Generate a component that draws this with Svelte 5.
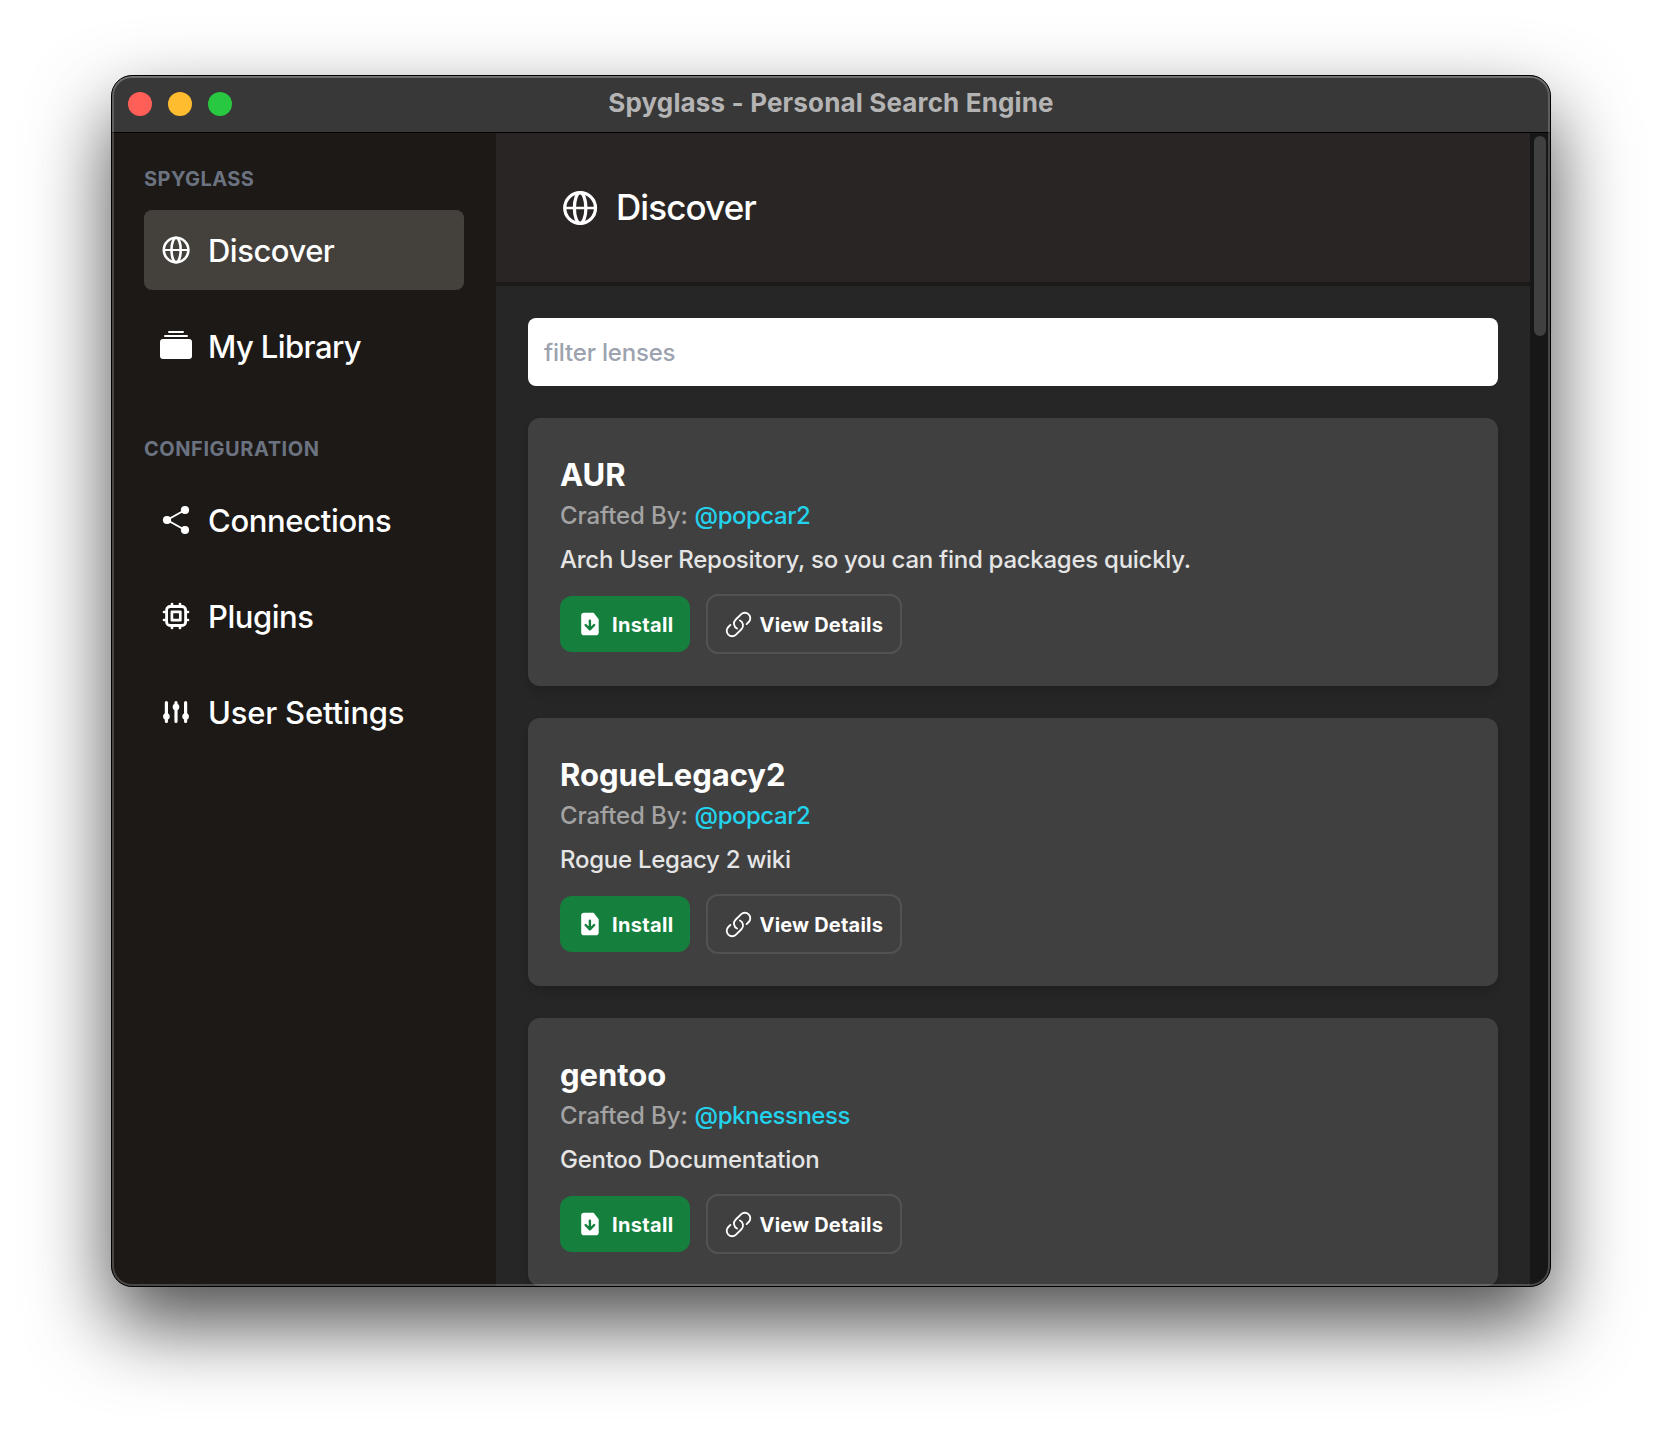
<script>
  const groups = [
    {
      title: 'Spyglass',
      tracking: 0.42,
      items: [
        { label: 'Discover', icon: 'globe', active: true, tracking: -0.5 },
        { label: 'My Library', icon: 'library', tracking: -0.58 }
      ]
    },
    {
      title: 'Configuration',
      tracking: 0.55,
      items: [
        { label: 'Connections', icon: 'share', tracking: -0.35 },
        { label: 'Plugins', icon: 'chip', tracking: -0.48 },
        { label: 'User Settings', icon: 'sliders', tracking: -0.2 }
      ]
    }
  ];

  const lenses = [
    { name: 'AUR', author: '@popcar2', description: 'Arch User Repository, so you can find packages quickly.' },
    { name: 'RogueLegacy2', author: '@popcar2', description: 'Rogue Legacy 2 wiki' },
    { name: 'gentoo', author: '@pknessness', description: 'Gentoo Documentation' }
  ];

  let filter = $state('');
</script>

{#snippet icon(name)}
  <svg class="icon" viewBox="0 0 32 32" fill="none" stroke="currentColor" stroke-linecap="round" stroke-linejoin="round" aria-hidden="true">
    {#if name === 'globe'}
      <circle cx="16.1" cy="16" r="12.3" stroke-width="2.6" />
      <ellipse cx="16.1" cy="16" rx="4.6" ry="12.3" stroke-width="2.6" />
      <path d="M4 16h24.2" stroke-width="2" />
    {:else if name === 'library'}
      <g transform="scale(2)" fill="currentColor" stroke="none">
        <path d="M0 13a1.5 1.5 0 0 0 1.5 1.5h13A1.5 1.5 0 0 0 16 13V6a1.5 1.5 0 0 0-1.5-1.5h-13A1.5 1.5 0 0 0 0 6v7zM2 3a.5.5 0 0 0 .5.5h11a.5.5 0 0 0 0-1h-11A.5.5 0 0 0 2 3zm2-2a.5.5 0 0 0 .5.5h7a.5.5 0 0 0 0-1h-7A.5.5 0 0 0 4 1z" />
      </g>
    {:else if name === 'share'}
      <path d="M25 6 7 16l18 10" stroke-width="2" />
      <g fill="currentColor" stroke="none">
        <circle cx="25" cy="6" r="4.1" />
        <circle cx="7" cy="16" r="4.1" />
        <circle cx="25" cy="26" r="4.1" />
      </g>
    {:else if name === 'chip'}
      <rect x="6.6" y="6.5" width="19" height="19" rx="3.6" stroke-width="2.8" />
      <rect x="11.9" y="11.8" width="8.4" height="8.4" stroke-width="2.7" />
      <path d="M12 6V4M20 6V4M12 28v-2M20 28v-2M6 12H4M6 20H4M28 12h-2M28 20h-2" stroke-width="2.7" />
    {:else if name === 'sliders'}
      <path d="M6.4 6.5v19M16 6.5v19M25.6 6.5v19" stroke-width="3.2" />
      <g fill="currentColor" stroke="none">
        <circle cx="6.4" cy="20.6" r="3.3" />
        <circle cx="16" cy="11" r="3.3" />
        <circle cx="25.6" cy="20.6" r="3.3" />
      </g>
    {/if}
  </svg>
{/snippet}

<div class="desktop">
  <div class="window">
    <header class="titlebar">
      <div class="lights">
        <span class="light close"></span>
        <span class="light minimize"></span>
        <span class="light zoom"></span>
      </div>
      <div class="title">Spyglass - Personal Search Engine</div>
    </header>

    <div class="body">
      <nav class="sidebar">
        {#each groups as group}
          <section class="group">
            <h2 style:letter-spacing="{group.tracking}px">{group.title}</h2>
            <ul>
              {#each group.items as item}
                <li class="item" class:active={item.active}>
                  {@render icon(item.icon)}
                  <span style:letter-spacing="{item.tracking}px">{item.label}</span>
                </li>
              {/each}
            </ul>
          </section>
        {/each}
      </nav>

      <main class="content">
        <div class="heading">
          {@render icon('globe')}
          <h1>Discover</h1>
        </div>
        <div class="lenses">
          <input class="filter" type="text" placeholder="filter lenses" bind:value={filter} />
          {#each lenses as lens}
            <article class="card">
              <h3>{lens.name}</h3>
              <p class="author">Crafted By: <a href="#author">{lens.author}</a></p>
              <p class="description">{lens.description}</p>
              <div class="actions">
                <button class="btn install">
                  <svg viewBox="0 0 24 24" aria-hidden="true">
                    <path fill="#fff" d="M6 .8h9.6l5.1 6.4v13.2a2.8 2.8 0 0 1-2.8 2.8H6a2.8 2.8 0 0 1-2.8-2.8V3.6A2.8 2.8 0 0 1 6 .8z" />
                    <path fill="none" stroke="#15803d" stroke-width="2.4" stroke-linecap="round" stroke-linejoin="round" d="M11.9 8.6v8.6m-4.3-4.2 4.3 4.4 4.3-4.4" />
                  </svg>
                  <span>Install</span>
                </button>
                <button class="btn details">
                  <svg viewBox="0 0 24 24" fill="none" stroke="currentColor" stroke-width="1.5" stroke-linecap="round" stroke-linejoin="round" aria-hidden="true">
                    <path d="M13.19 8.688a4.5 4.5 0 0 1 1.242 7.244l-4.5 4.5a4.5 4.5 0 0 1-6.364-6.364l1.757-1.757m13.35-.622 1.757-1.757a4.5 4.5 0 0 0-6.364-6.364l-4.5 4.5a4.5 4.5 0 0 0 1.242 7.244" />
                  </svg>
                  <span>View Details</span>
                </button>
              </div>
            </article>
          {/each}
        </div>
      </main>

      <div class="track"><div class="thumb"></div></div>
    </div>
  </div>
</div>

<style>
  :global(body) {
    margin: 0;
    background: #fff;
    overflow: hidden;
  }
  .desktop {
    box-sizing: border-box;
    height: 1434px;
    padding: 75px 111px 147px;
    font-family: Inter, 'Liberation Sans', sans-serif;
    font-weight: 450;
    color: #fff;
    overflow: hidden;
  }
  .window {
    position: relative;
    box-sizing: border-box;
    height: 1212px;
    display: flex;
    flex-direction: column;
    border: 1px solid #000;
    border-radius: 21px;
    background: #1c1917;
    overflow: hidden;
    box-shadow: 0 37px 80px rgba(0, 0, 0, 0.7);
  }
  /* light rim drawn over the whole window edge */
  .window::after {
    content: '';
    position: absolute;
    inset: 0;
    border-radius: 20px;
    box-shadow: inset 0 0 0 2px rgba(255, 255, 255, 0.2), inset 0 1.5px 0 rgba(255, 255, 255, 0.15);
    pointer-events: none;
  }
  h1, h2, h3, p, ul {
    margin: 0;
    padding: 0;
  }
  .titlebar {
    flex: none;
    display: grid;
    grid-template-columns: 1fr auto 1fr;
    align-items: center;
    height: 56px;
    padding: 0 16px;
    background: #383838;
    border-bottom: 1px solid #000;
  }
  .lights {
    display: flex;
    gap: 16px;
  }
  .light {
    width: 24px;
    height: 24px;
    border-radius: 50%;
  }
  .close { background: #ff5f57; }
  .minimize { background: #febc2e; }
  .zoom { background: #28c840; }
  .title {
    padding-bottom: 2px;
    font-size: 26px;
    font-weight: 700;
    line-height: 32px;
    letter-spacing: 0.15px;
    color: #b4b4b4;
  }
  .body {
    flex: 1;
    min-height: 0;
    display: flex;
  }
  .sidebar {
    flex: none;
    box-sizing: border-box;
    width: 384px;
    padding: 30px 32px 0;
    background: #1c1917;
  }
  .group + .group {
    margin-top: 47px;
  }
  .sidebar h2 {
    height: 47px;
    font-size: 20px;
    font-weight: 700;
    line-height: 32px;
    text-transform: uppercase;
    color: #6b7280;
  }
  ul {
    display: flex;
    flex-direction: column;
    gap: 16px;
    list-style: none;
  }
  .item {
    display: flex;
    align-items: center;
    gap: 16px;
    height: 80px;
    box-sizing: border-box;
    padding: 0 16px;
    border-radius: 8px;
    font-size: 31px;
    line-height: 48px;
    white-space: nowrap;
  }
  .item span {
    padding-top: 2px;
  }
  .active {
    background: #44403c;
  }
  .icon {
    flex: none;
    width: 32px;
    height: 32px;
  }
  .content {
    flex: 1;
    min-width: 0;
    display: flex;
    flex-direction: column;
    background: #262626;
    overflow: hidden;
  }
  .heading {
    flex: none;
    display: flex;
    align-items: center;
    gap: 16px;
    height: 149px;
    padding: 0 64px;
    background: #292524;
    border-bottom: 4px solid #1c1917;
  }
  .heading .icon {
    width: 40px;
    height: 40px;
  }
  .heading h1 {
    padding-bottom: 2px;
    font-size: 35px;
    font-weight: 450;
    line-height: 48px;
    letter-spacing: -0.9px;
  }
  .lenses {
    display: flex;
    flex-direction: column;
    gap: 32px;
    padding: 32px;
  }
  .filter {
    box-sizing: border-box;
    width: 100%;
    height: 68px;
    padding: 0 16px;
    border: 0;
    border-radius: 8px;
    background: #fff;
    color: #262626;
    font: 450 24px / 32px Inter, 'Liberation Sans', sans-serif;
    letter-spacing: -0.2px;
    outline: none;
  }
  .filter::placeholder {
    color: #9ca3af;
    opacity: 1;
  }
  .card {
    flex: none;
    box-sizing: border-box;
    height: 268px;
    padding: 32px;
    border-radius: 12px;
    background: #404040;
    box-shadow: 0 8px 12px -2px rgba(0, 0, 0, 0.1), 0 4px 8px -4px rgba(0, 0, 0, 0.1);
  }
  .card h3 {
    height: 50px;
    font-size: 31px;
    font-weight: 700;
    line-height: 49px;
    letter-spacing: -0.03px;
  }
  .author,
  .description {
    font-size: 24px;
    line-height: 32px;
  }
  .author {
    color: #a3a3a3;
    letter-spacing: -0.1px;
  }
  .author a {
    margin-left: 0.6px;
    color: #22d3ee;
    text-decoration: none;
    letter-spacing: -0.48px;
  }
  .description {
    margin-top: 12px;
    color: #e5e5e5;
    letter-spacing: -0.27px;
  }
  .actions {
    display: flex;
    align-items: center;
    gap: 16px;
    margin-top: 18px;
  }
  .btn {
    box-sizing: border-box;
    display: flex;
    align-items: center;
    margin: 0;
    border: 0;
    border-radius: 12px;
    background: transparent;
    color: #fff;
    font: 700 20px / 32px Inter, 'Liberation Sans', sans-serif;
    white-space: nowrap;
  }
  .btn span {
    padding-top: 1.5px;
  }
  .install {
    gap: 10px;
    width: 130px;
    height: 56px;
    padding: 0 0 0 18px;
    background: #15803d;
    letter-spacing: 0.35px;
  }
  .install svg {
    flex: none;
    width: 24px;
    height: 24px;
  }
  .details {
    gap: 7px;
    width: 196px;
    height: 60px;
    padding: 0 0 0 15.5px;
    border: 2px solid #525252;
    letter-spacing: 0.2px;
  }
  .details svg {
    flex: none;
    width: 29px;
    height: 29px;
  }
  .track {
    flex: none;
    box-sizing: border-box;
    width: 20px;
    padding: 3px 4px;
    background: #171717;
  }
  .thumb {
    width: 12px;
    height: 200px;
    border-radius: 6px;
    background: #404040;
  }
</style>
